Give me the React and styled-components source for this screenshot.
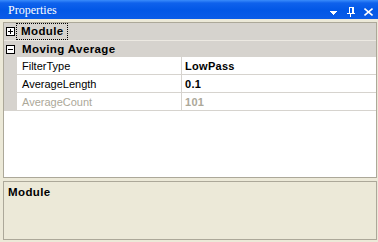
import React from "react";
import styled, { createGlobalStyle } from "styled-components";

const Global = createGlobalStyle`
  html, body { margin: 0; padding: 0; background: #ece9d8; }
  body { font-family: "Liberation Sans", Arial, sans-serif; font-size: 11px; color: #000; }
  #root { width: 378px; height: 242px; overflow: hidden; }
`;

const Frame = styled.div`
  width: 378px;
  height: 242px;
  display: flex;
  flex-direction: column;
  background: #ece9d8;
`;

const TitleBar = styled.div`
  height: 19px;
  flex: none;
  display: flex;
  align-items: center;
  padding: 0 5px 0 8px;
  background: linear-gradient(#3a8cfb 0px, #0f62ec 3px, #0257e6 10px, #0a5ce8 19px);
  color: #fff;
`;

const TitleText = styled.span`
  flex: 1;
  font-family: "Liberation Serif", "Times New Roman", serif;
  font-size: 12px;
  line-height: 19px;
  padding-top: 1px;
`;

const TitleButtons = styled.div`
  display: flex;
  align-items: center;
`;

const TitleIcon = styled.svg`
  display: block;
  width: ${(p) => p.$w}px;
  height: 19px;
  margin-left: ${(p) => p.$ml || 0}px;
`;

const Grid = styled.div`
  margin: 3px 1px 0 3px;
  height: 156px;
  flex: none;
  box-sizing: border-box;
  border: 1px solid #aca899;
  background: #fff;
  display: flex;
  flex-direction: column;
`;

const CategoryRow = styled.div`
  height: ${(p) => p.$h}px;
  flex: none;
  box-sizing: border-box;
  display: flex;
  align-items: center;
  background: #d6d3ce;
  border-bottom: ${(p) => (p.$line ? "1px solid #ece9e2" : "none")};
`;

const Expander = styled.span`
  width: 9px;
  height: 9px;
  box-sizing: border-box;
  border: 1px solid #000;
  background: #fff;
  margin: 0 0 0 2px;
  position: relative;
  flex: none;
  &::before {
    content: "";
    position: absolute;
    left: 1px;
    top: 3px;
    width: 5px;
    height: 1px;
    background: #000;
  }
  &::after {
    content: "";
    display: ${(p) => (p.$plus ? "block" : "none")};
    position: absolute;
    left: 3px;
    top: 1px;
    width: 1px;
    height: 5px;
    background: #000;
  }
`;

const CategoryLabel = styled.span`
  font-weight: bold;
  font-size: 11.5px;
  letter-spacing: 0.4px;
  margin-left: ${(p) => (p.$focus ? 2 : 7)}px;
  padding: ${(p) => (p.$focus ? "1px 3px 1px 4px" : "0")};
  outline: ${(p) => (p.$focus ? "1px dotted #000" : "none")};
  line-height: 13px;
`;

const PropRow = styled.div`
  height: 18px;
  flex: none;
  box-sizing: border-box;
  display: grid;
  grid-template-columns: 13px 165px 1fr;
  border-bottom: 1px solid #d6d3ce;
`;

const Margin = styled.div`
  background: #d6d3ce;
`;

const NameCell = styled.div`
  display: flex;
  align-items: center;
  padding-left: 5px;
  border-right: 1px solid #d6d3ce;
  color: ${(p) => (p.$disabled ? "#aca899" : "#000")};
`;

const ValueCell = styled.div`
  display: flex;
  align-items: center;
  padding-left: 3px;
  font-weight: bold;
  letter-spacing: 0.3px;
  color: ${(p) => (p.$disabled ? "#aca899" : "#000")};
`;

const Description = styled.div`
  margin: 3px 1px 0 3px;
  height: 59px;
  flex: none;
  box-sizing: border-box;
  border: 1px solid #aca899;
  background: #ece9d8;
  padding: 4px 0 0 4px;
`;

const DescTitle = styled.div`
  font-weight: bold;
  font-size: 11.5px;
  letter-spacing: 0.4px;
  line-height: 13px;
`;

const props = [
  { name: "FilterType", value: "LowPass" },
  { name: "AverageLength", value: "0.1" },
  { name: "AverageCount", value: "101", disabled: true },
];

export default function App() {
  return (
    <>
      <Global />
      <Frame>
        <TitleBar>
          <TitleText>Properties</TitleText>
          <TitleButtons>
            <TitleIcon $w={9} viewBox="0 0 9 19">
              <path d="M1 11h7v1H1zM2 12h5v1H2zM3 13h3v1H3zM4 14h1v1H4z" fill="#fff" />
            </TitleIcon>
            <TitleIcon $w={8} $ml={9} viewBox="0 0 8 19">
              <path d="M2 7h5v1H2zM2 8h1v5H2zM5 8h2v5H5zM0 13h8v1H0zM3 14h1v3H3z" fill="#fff" />
            </TitleIcon>
            <TitleIcon $w={9} $ml={9} viewBox="0 0 9 19">
              <path d="M0.5 8.5l8 7M8.5 8.5l-8 7" stroke="#fff" strokeWidth="1.6" />
            </TitleIcon>
          </TitleButtons>
        </TitleBar>
        <Grid>
          <CategoryRow $h={18} $line>
            <Expander $plus />
            <CategoryLabel $focus>Module</CategoryLabel>
          </CategoryRow>
          <CategoryRow $h={16}>
            <Expander />
            <CategoryLabel>Moving Average</CategoryLabel>
          </CategoryRow>
          {props.map((p) => (
            <PropRow key={p.name}>
              <Margin />
              <NameCell $disabled={p.disabled}>{p.name}</NameCell>
              <ValueCell $disabled={p.disabled}>{p.value}</ValueCell>
            </PropRow>
          ))}
        </Grid>
        <Description>
          <DescTitle>Module</DescTitle>
        </Description>
      </Frame>
    </>
  );
}
